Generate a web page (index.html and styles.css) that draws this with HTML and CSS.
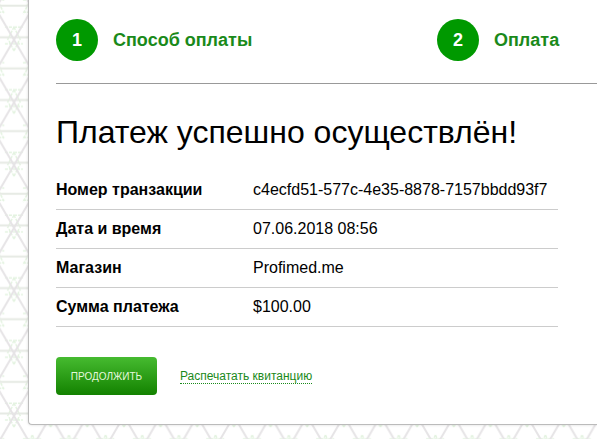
FILE: index.html
```html
<!DOCTYPE html>
<html lang="ru">
<head>
    <meta charset="UTF-8">
    <meta name="viewport" content="width=device-width, initial-scale=1.0">
    <title>Платеж успешно осуществлён</title>
    <link rel="stylesheet" href="styles.css">
</head>
<body>
    <svg class="pattern" width="597" height="439">
        <defs>
            <pattern id="lattice" x="14" y="39.8" width="36.65" height="62.7" patternUnits="userSpaceOnUse">
                <path class="leaf" d="M0 11L9 -7M0 11L-9 -7M-9 4H9M36.6 11L27.6 -7M27.6 4H36.6M9 35H27M18.3 19L27 37M18.3 19L9 37M9 23H27M0 50L9 68M36.6 50L27.6 68M0 50H9M27.6 50H36.6" />
                <path class="thin" d="M0 60.2H36.65M0 28.7H36.65" />
                <path d="M0 0L36.65 62.7M36.65 0L0 62.7" />
            </pattern>
        </defs>
        <rect width="597" height="439" fill="url(#lattice)" />
    </svg>
    <div class="card">
        <div class="steps">
            <div class="step"><span class="number">1</span>Способ оплаты</div>
            <div class="step"><span class="number">2</span>Оплата</div>
        </div>
        <h1>Платеж успешно осуществлён!</h1>
        <table class="details">
            <tr><th>Номер транзакции</th><td>c4ecfd51-577c-4e35-8878-7157bbdd93f7</td></tr>
            <tr><th>Дата и время</th><td>07.06.2018 08:56</td></tr>
            <tr><th>Магазин</th><td>Profimed.me</td></tr>
            <tr><th>Сумма платежа</th><td>$100.00</td></tr>
        </table>
        <div class="actions">
            <button class="continue">ПРОДОЛЖИТЬ</button>
            <a class="print" href="#">Распечатать квитанцию</a>
        </div>
    </div>
</body>
</html>
```

FILE: styles.css
```css
body {
    margin: 0;
    height: 439px;
    background-color: #fff;
    font-family: "Liberation Sans", Arial, sans-serif;
    color: #000;
}
.pattern {
    position: absolute;
    top: 0;
    left: 0;
    z-index: -1;
}
.pattern path {
    fill: none;
    stroke: #e6e4e6;
    stroke-width: 2;
}
.pattern .thin {
    stroke: #e6eae4;
}
.pattern .leaf {
    stroke: #e4f3e1;
    stroke-width: 1.5;
    stroke-dasharray: 3 1;
}
.card {
    box-sizing: border-box;
    height: 425px;
    margin-left: 28px;
    padding: 19px 0 0 27px;
    background-color: #fff;
    border: 1px solid #bbb;
    border-width: 0 0 1px 1px;
    border-radius: 0 0 0 4px;
    box-shadow: 0 0 3px rgba(0, 0, 0, 0.15);
}
.steps {
    display: grid;
    grid-template-columns: 381px 1fr;
    height: 64px;
    border-bottom: 1px solid #999;
}
.step {
    display: flex;
    align-items: center;
    height: 42px;
    font-size: 18px;
    font-weight: bold;
    color: #1a8a1a;
}
.number {
    width: 42px;
    height: 42px;
    margin-right: 15px;
    border-radius: 50%;
    background-color: #009900;
    color: #fff;
    line-height: 42px;
    text-align: center;
}
h1 {
    margin: 29px 0 19px;
    font-size: 32px;
    font-weight: normal;
    line-height: 38px;
    white-space: nowrap;
}
.details {
    width: 502px;
    border-collapse: collapse;
    font-size: 16px;
}
.details th,
.details td {
    box-sizing: border-box;
    height: 39px;
    padding: 0;
    border-bottom: 1px solid #ccc;
    text-align: left;
    white-space: nowrap;
}
.details tr:first-child th,
.details tr:first-child td {
    padding-top: 1px;
}
.details th {
    width: 197px;
}
.actions {
    display: flex;
    align-items: center;
    margin-top: 30px;
}
.continue {
    width: 101px;
    height: 38px;
    margin-right: 23px;
    padding: 2px 0 0;
    border: 0;
    border-radius: 4px;
    background: linear-gradient(#46bb30, #138200);
    color: #e4f8dc;
    font-family: inherit;
    font-size: 10px;
}
.print {
    margin-top: 2px;
    border-bottom: 1px dotted #1a8a1a;
    color: #1a8a1a;
    font-size: 12px;
    line-height: 14px;
    text-decoration: none;
}
```
